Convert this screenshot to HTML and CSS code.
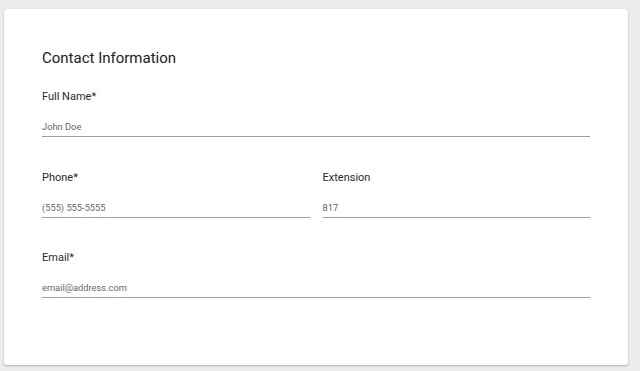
FILE: index.html
```html
<!DOCTYPE html>
<html>
<head>
<meta charset="utf-8">
<link rel="stylesheet" href="styles.css">
</head>
<body>
<div class="card">
  <h2 class="title">Contact Information</h2>
  <div class="row">
    <div class="field">
      <label class="label">Full Name*</label>
      <div class="input">John Doe</div>
    </div>
  </div>
  <div class="row">
    <div class="field">
      <label class="label">Phone*</label>
      <div class="input">(555) 555-5555</div>
    </div>
    <div class="field">
      <label class="label">Extension</label>
      <div class="input">817</div>
    </div>
  </div>
  <div class="row">
    <div class="field">
      <label class="label">Email*</label>
      <div class="input">email@address.com</div>
    </div>
  </div>
</div>
</body>
</html>
```
FILE: styles.css
```css
html, body {
  margin: 0;
  padding: 0;
  background: #ececec;
  font-family: Roboto, "Noto Sans", sans-serif;
}
body {
  padding: 9px 12px 6px 4px;
}
.card {
  background: #fff;
  border-radius: 3px;
  box-shadow: 0 1px 2px rgba(0,0,0,0.25), 0 0 1px rgba(0,0,0,0.08);
  padding: 40px 38px 0 38px;
  height: 356px;
  box-sizing: border-box;
}
.title {
  margin: 0;
  font-size: 15px;
  font-weight: 400;
  color: #212121;
  line-height: 18px;
  margin-bottom: 23px;
}
.row {
  display: flex;
  gap: 13px;
  margin-bottom: 33.5px;
}
.field {
  flex: 1;
  display: flex;
  flex-direction: column;
}
.label {
  font-size: 11px;
  color: #2a2a2a;
  line-height: 14px;
  margin-bottom: 17px;
}
.input {
  font-size: 9.3px;
  color: #666;
  line-height: 12px;
  padding-bottom: 3px;
  border-bottom: 1px solid #9e9e9e;
}
```
